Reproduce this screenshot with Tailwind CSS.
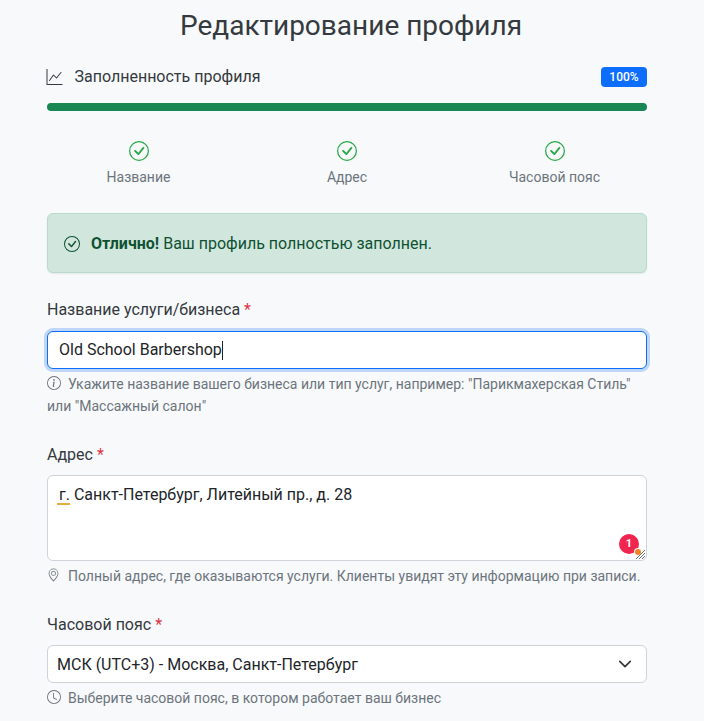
<!DOCTYPE html>
<html lang="ru">
<head>
<meta charset="utf-8">
<script src="https://cdn.jsdelivr.net/npm/@tailwindcss/browser@4"></script>
</head>
<body class="bg-[#f8f9fa] font-['Roboto',sans-serif] text-[#212529] h-[721px] overflow-hidden">
<main class="w-[600px] ml-[47px] flex flex-col">
  <h1 class="text-[28px] leading-[34px] font-normal text-center h-[34px] mt-[9px] pl-[8px] text-[#343a40]">Редактирование профиля</h1>

  <div class="flex items-center justify-between mt-[24px] h-[20px]">
    <div class="flex items-center gap-[11.5px] text-[16px] leading-[20px] text-[#343a40]">
      <svg width="17" height="16" viewBox="0 0 16 16" fill="currentColor" class="shrink-0 -ml-[1px]"><path fill-rule="evenodd" d="M0 0h1v15h15v1H0V0Zm14.817 3.113a.5.5 0 0 1 .07.704l-4.5 5.5a.5.5 0 0 1-.74.037L7.06 6.767l-3.656 5.027a.5.5 0 0 1-.808-.588l4-5.5a.5.5 0 0 1 .758-.06l2.609 2.61 4.15-5.073a.5.5 0 0 1 .704-.07Z"/></svg>
      <span>Заполненность профиля</span>
    </div>
    <span class="bg-[#0d6efd] text-white text-[12px] leading-[20px] h-[20px] w-[46px] text-center font-medium rounded-[4px]">100%</span>
  </div>

  <div class="h-[8px] rounded-full bg-[#198754] mt-[16px]"></div>

  <div class="grid grid-cols-3 mt-[30px] text-[14px] leading-[20px] text-[#6c757d]">
    <div class="flex flex-col items-center gap-[6px] pr-[16px]">
      <svg width="20" height="20" viewBox="0 0 16 16" fill="#28a745"><path d="M8 15A7 7 0 1 1 8 1a7 7 0 0 1 0 14zm0 1A8 8 0 1 0 8 0a8 8 0 0 0 0 16z"/><path d="M10.97 4.97a.235.235 0 0 0-.02.022L7.477 9.417 5.384 7.323a.75.75 0 0 0-1.06 1.06L6.97 11.03a.75.75 0 0 0 1.079-.02l3.992-4.99a.75.75 0 0 0-1.071-1.05z"/></svg>
      <span class="-ml-[1px]">Название</span>
    </div>
    <div class="flex flex-col items-center gap-[6px]">
      <svg width="20" height="20" viewBox="0 0 16 16" fill="#28a745"><path d="M8 15A7 7 0 1 1 8 1a7 7 0 0 1 0 14zm0 1A8 8 0 1 0 8 0a8 8 0 0 0 0 16z"/><path d="M10.97 4.97a.235.235 0 0 0-.02.022L7.477 9.417 5.384 7.323a.75.75 0 0 0-1.06 1.06L6.97 11.03a.75.75 0 0 0 1.079-.02l3.992-4.99a.75.75 0 0 0-1.071-1.05z"/></svg>
      <span>Адрес</span>
    </div>
    <div class="flex flex-col items-center gap-[6px] pl-[16px]">
      <svg width="20" height="20" viewBox="0 0 16 16" fill="#28a745"><path d="M8 15A7 7 0 1 1 8 1a7 7 0 0 1 0 14zm0 1A8 8 0 1 0 8 0a8 8 0 0 0 0 16z"/><path d="M10.97 4.97a.235.235 0 0 0-.02.022L7.477 9.417 5.384 7.323a.75.75 0 0 0-1.06 1.06L6.97 11.03a.75.75 0 0 0 1.079-.02l3.992-4.99a.75.75 0 0 0-1.071-1.05z"/></svg>
      <span class="-ml-[1px]">Часовой пояс</span>
    </div>
  </div>

  <div class="mt-[26px] h-[60px] rounded-[6px] border border-[#badbcc] bg-[#d1e7dd] text-[#0f5132] flex items-center pl-[16px] pt-[1px] gap-[11px] text-[16px] shadow-[0_1px_2px_rgba(0,0,0,0.08)]">
    <svg width="16" height="16" viewBox="0 0 16 16" fill="currentColor" class="shrink-0"><path d="M8 15A7 7 0 1 1 8 1a7 7 0 0 1 0 14zm0 1A8 8 0 1 0 8 0a8 8 0 0 0 0 16z"/><path d="M10.97 4.97a.235.235 0 0 0-.02.022L7.477 9.417 5.384 7.323a.75.75 0 0 0-1.06 1.06L6.97 11.03a.75.75 0 0 0 1.079-.02l3.992-4.99a.75.75 0 0 0-1.071-1.05z"/></svg>
    <span><strong class="font-bold">Отлично!</strong> Ваш профиль полностью заполнен.</span>
  </div>

  <label class="block text-[16px] leading-[24px] mt-[25px] text-[#343a40]">Название услуги/бизнеса <span class="text-[#dc3545]">*</span></label>
  <div class="mt-[9px] h-[38px] rounded-[6px] bg-white border border-[#0d6efd] shadow-[0_0_0_3px_rgba(13,110,253,0.25)] flex items-center pl-[11px] text-[16px]">
    <span>Old School Barbershop</span><span class="w-px h-[19px] bg-[#212529]"></span>
  </div>
  <div class="flex mt-[4px] text-[14px] leading-[22px] text-[#6c757d]">
    <p><svg width="14" height="14" viewBox="0 0 16 16" fill="currentColor" class="inline-block align-[-1px] mr-[7px]"><path d="M8 15A7 7 0 1 1 8 1a7 7 0 0 1 0 14zm0 1A8 8 0 1 0 8 0a8 8 0 0 0 0 16z"/><path d="m8.93 6.588-2.29.287-.082.38.45.083c.294.07.352.176.288.469l-.738 3.468c-.194.897.105 1.319.808 1.319.545 0 1.178-.252 1.465-.598l.088-.416c-.2.176-.492.246-.686.246-.275 0-.375-.193-.304-.533L8.93 6.588zM9 4.5a1 1 0 1 1-2 0 1 1 0 0 1 2 0z"/></svg>Укажите название вашего бизнеса или тип услуг, например: "Парикмахерская Стиль" или "Массажный салон"</p>
  </div>

  <label class="block text-[16px] leading-[24px] mt-[26px] text-[#343a40]">Адрес <span class="text-[#dc3545]">*</span></label>
  <div class="relative mt-[8px] h-[86px] rounded-[6px] bg-white border border-[#ced4da] pl-[11px] pt-[7px] text-[16px] leading-[24px]">
    <span class="relative">г.<span class="absolute left-[-2px] right-0 top-[18px] h-[2px] bg-[#e9ac3f]"></span></span> Санкт-Петербург, Литейный пр., д. 28
    <span class="absolute right-[7px] bottom-[6px] w-[20px] h-[20px] rounded-full bg-[#f0264f] text-white text-[11px] leading-[20px] font-bold text-center">1</span>
    <span class="absolute right-[5px] bottom-[5px] w-[6px] h-[6px] rounded-full bg-[#f58220] ring-1 ring-white"></span>
    <svg width="11" height="11" viewBox="0 0 11 11" class="absolute right-0 bottom-0" stroke="#6b7280" stroke-width="1"><path d="M1 10 10 1M4 10l6-6M7 10l3-3"/></svg>
  </div>
  <div class="flex items-start gap-[8px] mt-[5px] text-[14px] leading-[21px] text-[#6c757d]">
    <svg width="13" height="14" viewBox="0 0 16 16" fill="currentColor" class="shrink-0 mt-[2px]"><path d="M12.166 8.94c-.524 1.062-1.234 2.12-1.96 3.07A31.493 31.493 0 0 1 8 14.58a31.481 31.481 0 0 1-2.206-2.57c-.726-.95-1.436-2.008-1.96-3.07C3.304 7.867 3 6.862 3 6a5 5 0 0 1 10 0c0 .862-.305 1.867-.834 2.94zM8 16s6-5.686 6-10A6 6 0 0 0 2 6c0 4.314 6 10 6 10z"/><path d="M8 8a2 2 0 1 1 0-4 2 2 0 0 1 0 4zm0 1a3 3 0 1 0 0-6 3 3 0 0 0 0 6z"/></svg>
    <span>Полный адрес, где оказываются услуги. Клиенты увидят эту информацию при записи.</span>
  </div>

  <label class="block text-[16px] leading-[24px] mt-[26px] text-[#343a40]">Часовой пояс <span class="text-[#dc3545]">*</span></label>
  <div class="mt-[8px] h-[38px] rounded-[6px] bg-white border border-[#ced4da] flex items-center justify-between pl-[9px] pr-[14px] text-[16px]">
    <span class="mt-[1px]">МСК (UTC+3) - Москва, Санкт-Петербург</span>
    <svg width="14" height="14" viewBox="0 0 16 16" fill="none" stroke="#343a40" stroke-width="2" stroke-linecap="round" stroke-linejoin="round"><path d="m2 5 6 6 6-6"/></svg>
  </div>
  <div class="flex items-start gap-[8px] mt-[5px] text-[14px] leading-[21px] text-[#6c757d]">
    <svg width="14" height="14" viewBox="0 0 16 16" fill="currentColor" class="shrink-0 mt-[2px]"><path d="M8 3.5a.5.5 0 0 0-1 0V9a.5.5 0 0 0 .252.434l3.5 2a.5.5 0 0 0 .496-.868L8 8.71V3.5z"/><path d="M8 16A8 8 0 1 0 8 0a8 8 0 0 0 0 16zm7-8A7 7 0 1 1 1 8a7 7 0 0 1 14 0z"/></svg>
    <span class="-ml-[1px]">Выберите часовой пояс, в котором работает ваш бизнес</span>
  </div>
</main>
</body>
</html>
